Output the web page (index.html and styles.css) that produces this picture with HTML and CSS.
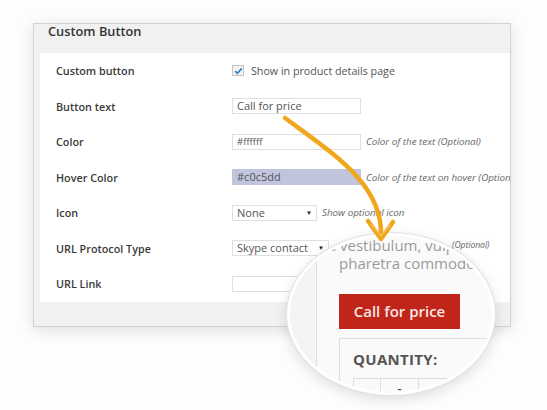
FILE: index.html
```html
<!DOCTYPE html>
<html>
<head>
<meta charset="utf-8">
<link rel="stylesheet" href="styles.css">
</head>
<body>
<div class="page">
  <div class="panel">
    <div class="panel-head">Custom Button</div>
    <div class="panel-body">
      <div class="row">
        <div class="label">Custom button</div>
        <div class="ctrl">
          <span class="checkbox"><svg width="9" height="8" viewBox="0 0 9 8"><path d="M1.2 4.2 L3.4 6.3 L7.8 1.4" fill="none" stroke="#2a7fc0" stroke-width="1.6"/></svg></span>
          <span class="cbtext">Show in product details page</span>
        </div>
      </div>
      <div class="row">
        <div class="label">Button text</div>
        <div class="ctrl"><span class="input">Call for price</span></div>
      </div>
      <div class="row">
        <div class="label">Color</div>
        <div class="ctrl"><span class="input small">#ffffff</span><span class="help">Color of the text (Optional)</span></div>
      </div>
      <div class="row">
        <div class="label">Hover Color</div>
        <div class="ctrl"><span class="input hover">#c0c5dd</span><span class="help">Color of the text on hover (Optional)</span></div>
      </div>
      <div class="row">
        <div class="label">Icon</div>
        <div class="ctrl"><span class="select sel-none">None<span class="caret">▼</span></span><span class="help">Show optional icon</span></div>
      </div>
      <div class="row">
        <div class="label">URL Protocol Type</div>
        <div class="ctrl"><span class="select sel-skype">Skype contact<span class="caret">▼</span></span></div>
      </div>
      <div class="row">
        <div class="label">URL Link</div>
        <div class="ctrl"><span class="input"></span></div>
      </div>
    </div>
    <div class="panel-foot"></div>
  </div>

  <div class="magnifier">
    <div class="mag-left"></div>
    <div class="mag-main">
      <div class="mag-text first">s vestibulum, vulputate</div>
      <div class="mag-text">pharetra commodo</div>
      <div class="mag-btn">Call for price</div>
      <div class="mag-box">
        <div class="qty">QUANTITY:</div>
        <div class="cells"><span class="cell c1"></span><span class="cell c2">-</span><span class="cell c3"></span></div>
      </div>
    </div>
  </div>
  <span class="mag-optional">(Optional)</span>

  <svg class="arrow" width="547" height="410" viewBox="0 0 547 410">
    <path d="M285 118 C335 155 383 185 381 236" fill="none" stroke="#f1a71c" stroke-width="4.5" stroke-linecap="round"/>
    <polyline points="368,221 381,239 393,222" fill="none" stroke="#f1a71c" stroke-width="4.5" stroke-linecap="round" stroke-linejoin="round"/>
    <polyline points="371,224 381,236 390,225" fill="none" stroke="#f8d27a" stroke-width="1" stroke-linecap="round" stroke-linejoin="round"/>
  </svg>
</div>
</body>
</html>
```
FILE: styles.css
```css
html, body {
  margin: 0;
  padding: 0;
  background: #fdfdfd;
}
.page {
  position: relative;
  width: 547px;
  height: 410px;
  overflow: hidden;
  padding: 23px 0 0 33px;
  box-sizing: border-box;
  font-family: "Open Sans", "Liberation Sans", sans-serif;
}
.panel {
  width: 478px;
  box-sizing: border-box;
  border: 1px solid #d3d3d3;
  background: #f1f1f1;
  box-shadow: 0 3px 14px rgba(0,0,0,0.12);
  overflow: hidden;
}
.panel-head {
  height: 29px;
  padding-left: 14px;
  font-size: 12.8px;
  font-weight: 600;
  color: #333;
  line-height: 15px;
  padding-top: 0;
  box-sizing: border-box;
}
.panel-body {
  margin-left: 6px;
  background: #fff;
  display: flex;
  flex-direction: column;
}
.row {
  height: 35.5px;
  display: flex;
  align-items: center;
}
.label {
  width: 176px;
  padding-left: 16px;
  flex: none;
  font-size: 10.8px;
  font-weight: 600;
  color: #3a3a3a;
}
.ctrl {
  display: flex;
  align-items: center;
  white-space: nowrap;
}
.checkbox {
  width: 10px;
  height: 9px;
  border: 1px solid #c4c4c4;
  background: #eef3f8;
  display: flex;
  align-items: center;
  justify-content: center;
}
.cbtext {
  margin-left: 7px;
  font-size: 10.7px;
  color: #555;
}
.input {
  width: 129px;
  height: 16px;
  box-sizing: border-box;
  border: 1px solid #e0e0e0;
  background: #fff;
  font-size: 11px;
  color: #555;
  line-height: 14px;
  padding-left: 4px;
}
.input.small {
  font-size: 9.5px;
}
.input.hover {
  background: #c0c5dd;
  border-color: #c0c5dd;
  font-size: 11px;
}
.select {
  height: 16px;
  box-sizing: border-box;
  border: 1px solid #e0e0e0;
  background: #fff;
  font-size: 11px;
  color: #555;
  line-height: 14px;
  padding-left: 4px;
  display: flex;
  justify-content: space-between;
  padding-right: 4px;
}
.sel-none { width: 85px; }
.sel-skype { width: 97px; }
.caret {
  font-size: 6px;
  color: #222;
}
.help {
  margin-left: 5px;
  font-size: 9.8px;
  font-style: italic;
  color: #666;
}
.panel-foot {
  height: 24px;
}
.magnifier {
  position: absolute;
  left: 287px;
  top: 233px;
  width: 208px;
  height: 162px;
  box-sizing: border-box;
  border: 3px solid #fff;
  border-radius: 50%;
  overflow: hidden;
  background: #fafafa;
  box-shadow: 0 0 0 1px #e2e2e2, 0 4px 14px rgba(0,0,0,0.14);
  display: flex;
}
.mag-left {
  width: 26px;
  flex: none;
  background: #f4f4f4;
  border-right: 1px solid #e0e0e0;
}
.mag-main {
  padding-left: 22px;
  white-space: nowrap;
}
.mag-text {
  font-size: 15px;
  line-height: 18px;
  color: #9a9a9a;
}
.mag-text.first {
  margin-left: -10px;
}
.mag-btn {
  margin-top: 22px;
  width: 121px;
  height: 35px;
  background: #bf2519;
  color: #fbe6e3;
  font-size: 15px;
  font-weight: 600;
  line-height: 35px;
  text-align: center;
}
.mag-box {
  margin-top: 9px;
  border-top: 1px solid #dedede;
  border-left: 1px solid #dedede;
  padding: 10px 0 0 13px;
  width: 200px;
}
.qty {
  font-size: 15px;
  font-weight: 700;
  color: #555;
  line-height: 20px;
  letter-spacing: 0.3px;
}
.cells {
  margin-top: 9px;
  display: flex;
}
.cell {
  height: 30px;
  border: 1px solid #dedede;
  border-right: none;
  box-sizing: border-box;
  font-size: 14px;
  color: #444;
  text-align: center;
  line-height: 20px;
}
.c1 { width: 27px; }
.c2 { width: 38px; }
.c3 { width: 40px; }
.mag-optional {
  position: absolute;
  left: 452px;
  top: 239px;
  font-family: "Open Sans", "Liberation Sans", sans-serif;
  font-size: 8.5px;
  font-style: italic;
  color: #666;
  background: rgba(250,250,250,0.6);
}
.arrow {
  position: absolute;
  left: 0;
  top: 0;
  pointer-events: none;
}
```
